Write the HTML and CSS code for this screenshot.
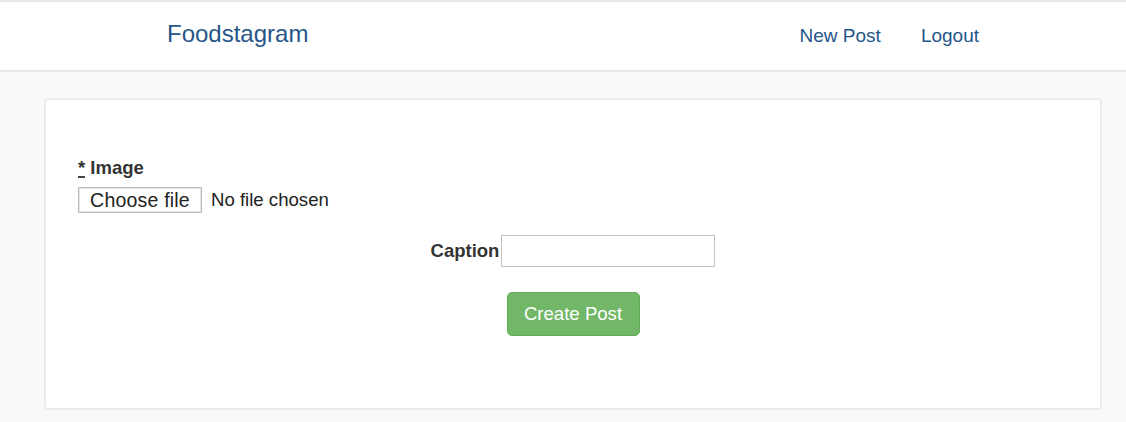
FILE: index.html
```html
<!DOCTYPE html>
<html lang="en">
<head>
<meta charset="utf-8">
<title>Foodstagram</title>
<link rel="stylesheet" href="styles.css">
</head>
<body>
<nav class="navbar">
  <div class="navbar-inner">
    <a class="brand" href="#">Foodstagram</a>
    <ul class="nav-links">
      <li><a href="#">New Post</a></li>
      <li><a href="#">Logout</a></li>
    </ul>
  </div>
</nav>
<main class="card">
  <form class="post-form">
    <div class="field">
      <label class="field-label"><abbr title="required">*</abbr> Image</label>
      <div class="file-input">
        <span class="file-button">Choose file</span>
        <span class="file-status">No file chosen</span>
      </div>
    </div>
    <div class="caption-row">
      <label class="caption-label" for="caption">Caption</label>
      <input class="caption-input" id="caption" type="text">
    </div>
    <div class="actions">
      <button class="btn-success" type="button">Create Post</button>
    </div>
  </form>
</main>
</body>
</html>
```

FILE: styles.css
```css
* {
  box-sizing: border-box;
}

html, body {
  margin: 0;
  padding: 0;
}

body {
  background: #f9f9f9;
  font-family: "Liberation Sans", Arial, sans-serif;
  color: #333;
  font-size: 18.5px;
}

.navbar {
  background: #fff;
  border-top: 2px solid #e7e7e7;
  border-bottom: 2px solid #e7e7e7;
  height: 72px;
}

.navbar-inner {
  display: flex;
  align-items: baseline;
  justify-content: space-between;
  padding: 17px 147px 0 167px;
}

.brand {
  font-size: 24px;
  line-height: 30px;
  color: #26568a;
  text-decoration: none;
}

.nav-links {
  display: flex;
  gap: 40px;
  list-style: none;
  margin: 0;
  padding: 0;
}

.nav-links a {
  font-size: 19px;
  line-height: 30px;
  color: #26568a;
  text-decoration: none;
}

.card {
  display: block;
  margin: 26px 24px 0 44px;
  height: 312px;
  background: #fff;
  border: 2px solid #ececec;
  border-radius: 4px;
  padding: 55px 32px 0 32px;
}

.field-label {
  display: block;
  font-weight: bold;
  line-height: 26px;
  margin-bottom: 6px;
}

.field-label abbr {
  text-decoration: underline dashed;
  text-underline-offset: 3px;
  cursor: help;
}

.file-input {
  display: flex;
  align-items: center;
  gap: 9px;
}

.file-button {
  display: inline-flex;
  align-items: center;
  justify-content: center;
  width: 124px;
  height: 26px;
  font-size: 19.5px;
  letter-spacing: 0.2px;
  background: #fff;
  border: 1px solid #bdbdbd;
  box-shadow: inset 0 0 0 1px #e4e4e4;
  color: #222;
}

.file-status {
  font-size: 18.6px;
  color: #222;
}

.caption-row {
  display: flex;
  justify-content: center;
  align-items: center;
  margin-top: 22px;
}

.caption-label {
  font-weight: bold;
  line-height: 26px;
}

.caption-input {
  margin-left: 2px;
  width: 214px;
  height: 32px;
  border: 1px solid #c2c2c2;
  font: inherit;
  padding: 2px 6px;
  outline: none;
}

.actions {
  display: flex;
  justify-content: center;
  margin-top: 25px;
}

.btn-success {
  width: 133px;
  height: 44px;
  font-family: inherit;
  font-size: 18.6px;
  color: #fff;
  background: #71b767;
  border: 1px solid #62ab58;
  border-radius: 5px;
  padding: 0;
}
```
